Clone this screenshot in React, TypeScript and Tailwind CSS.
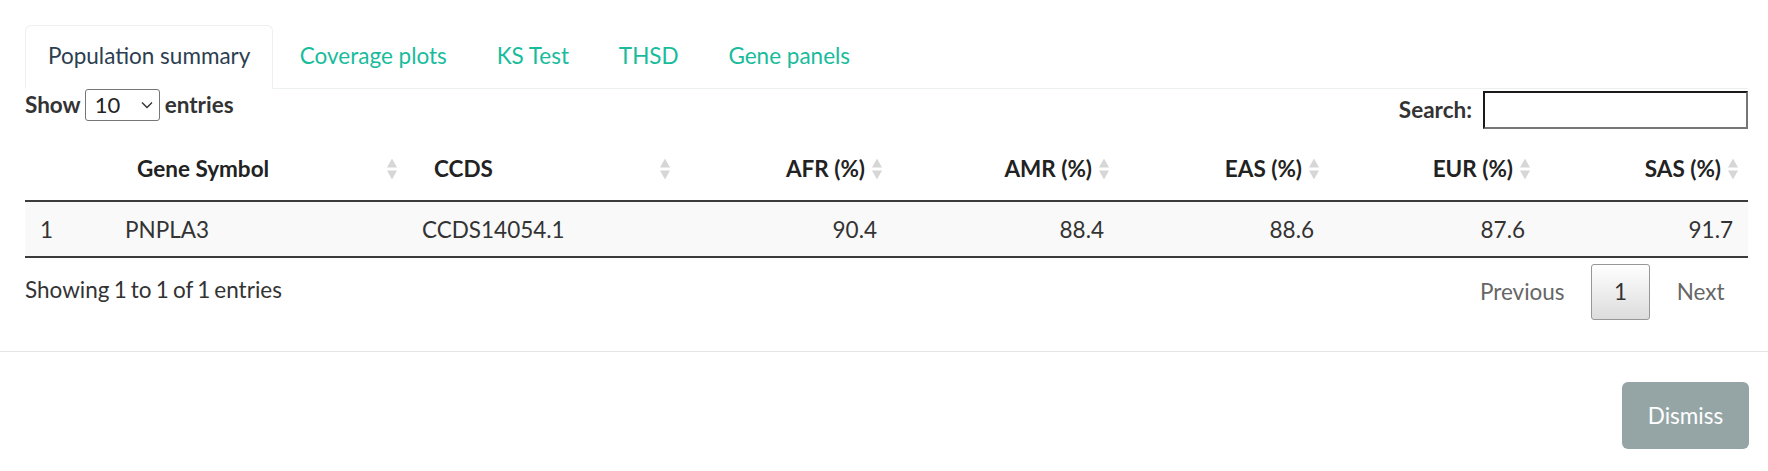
import React from "react";

const SortIcon = () => (
  <svg
    width="10"
    height="21"
    viewBox="0 0 10 21"
    className="absolute right-[10px] top-1/2 -translate-y-1/2"
  >
    <path d="M5 0 L10 9 L0 9 Z" fill="#d6d6d6" />
    <path d="M0 12 L10 12 L5 21 Z" fill="#d6d6d6" />
  </svg>
);

const cols = ["w-[85px]", "w-[297px]", "w-[273px]", "w-[212px]", "w-[227px]", "w-[210px]", "w-[211px]", "w-[208px]"];

export default function App() {
  const thBase =
    "relative border-b-2 border-[#3c3c3c] px-[27px] pt-[15px] pb-[15px] leading-[32px] font-bold text-[#222]";
  const tdBase = "border-b-2 border-[#3c3c3c] px-[15px] pt-[12px] pb-[10px] leading-[32px] text-[#333]";
  return (
    <div className="font-['Lato',sans-serif] text-[22.5px] bg-white w-[1768px] h-[471px] overflow-hidden">
      <div className="pl-[25px] pr-[20px] pt-[25px] pb-[31px]">
        {/* Tabs */}
        <div className="flex border-b border-[#ecf0f1] h-[64px]">
          <div className="mr-[3px] -mb-px px-[22px] pt-[14px] pb-[16px] leading-[32px] border border-[#ecf0f1] border-b-white rounded-t-[6px] bg-white text-[#2c3e50]">
            Population summary
          </div>
          {["Coverage plots", "KS Test", "THSD", "Gene panels"].map((t) => (
            <div
              key={t}
              className="mr-[3px] -mb-px px-[22.4px] pt-[14px] pb-[16px] leading-[32px] border border-transparent text-[#18bc9c]"
            >
              {t}
            </div>
          ))}
        </div>

        {/* Filter row */}
        <div className="flex justify-between items-start h-[49px]">
          <div className="flex items-center h-[32px] font-bold text-[#333] leading-[32px]">
            <span>Show</span>
            <div className="ml-[4px] mr-[5px] w-[75px] h-[32px] border border-[#767676] rounded-[3px] flex items-center justify-between pl-[9px] pr-[6px] font-normal text-[22px] text-[#222] bg-white">
              <span>10</span>
              <svg width="12" height="8" viewBox="0 0 12 8">
                <path d="M1 1.5 L6 6.5 L11 1.5" fill="none" stroke="#333" strokeWidth="1.4" />
              </svg>
            </div>
            <span>entries</span>
          </div>
          <div className="flex items-center mt-[2px] font-bold text-[#333] leading-[32px]">
            <span>Search:</span>
            <div className="ml-[11px] w-[265px] h-[38px] border-2 border-t-[#1a1a1a] border-l-[#1a1a1a] border-r-[#767676] border-b-[#767676] bg-white" />
          </div>
        </div>

        {/* Table */}
        <table className="w-[1723px] table-fixed border-separate border-spacing-0">
          <colgroup>
            {cols.map((c, i) => (
              <col key={i} className={c} />
            ))}
          </colgroup>
          <thead>
            <tr>
              <th className={thBase}></th>
              <th className={`${thBase} text-left`}>
                Gene Symbol
                <SortIcon />
              </th>
              <th className={`${thBase} text-left`}>
                CCDS
                <SortIcon />
              </th>
              <th className={`${thBase} text-right`}>
                AFR (%)
                <SortIcon />
              </th>
              <th className={`${thBase} text-right`}>
                AMR (%)
                <SortIcon />
              </th>
              <th className={`${thBase} text-right`}>
                EAS (%)
                <SortIcon />
              </th>
              <th className={`${thBase} text-right`}>
                EUR (%)
                <SortIcon />
              </th>
              <th className={`${thBase} text-right`}>
                SAS (%)
                <SortIcon />
              </th>
            </tr>
          </thead>
          <tbody>
            <tr className="bg-[#f9f9f9]">
              <td className={`${tdBase} text-left`}>1</td>
              <td className={`${tdBase} text-left`}>PNPLA3</td>
              <td className={`${tdBase} text-left`}>CCDS14054.1</td>
              <td className={`${tdBase} text-right`}>90.4</td>
              <td className={`${tdBase} text-right`}>88.4</td>
              <td className={`${tdBase} text-right`}>88.6</td>
              <td className={`${tdBase} text-right`}>87.6</td>
              <td className={`${tdBase} text-right`}>91.7</td>
            </tr>
          </tbody>
        </table>

        {/* Footer */}
        <div className="flex justify-between items-start h-[62px]">
          <div className="pt-[16px] leading-[32px] text-[#333] [word-spacing:-1.6px]">Showing 1 to 1 of 1 entries</div>
          <div className="pt-[6px] flex items-start leading-[32px]">
            <div className="px-[22.5px] py-[11px] border border-transparent text-[#666]">Previous</div>
            <div className="ml-[3px] px-[22px] py-[11px] border border-[#979797] rounded-[3px] bg-gradient-to-b from-white to-[#dcdcdc] text-[#333]">
              1
            </div>
            <div className="ml-[3px] px-[22.5px] py-[11px] border border-transparent text-[#666]">Next</div>
          </div>
        </div>
      </div>

      {/* Modal footer */}
      <div className="border-t border-[#e5e5e5] pt-[30px] pr-[19px] flex justify-end">
        <div className="w-[127px] h-[67px] rounded-[6px] bg-[#95a5a6] text-white flex items-center justify-center">
          Dismiss
        </div>
      </div>
    </div>
  );
}
